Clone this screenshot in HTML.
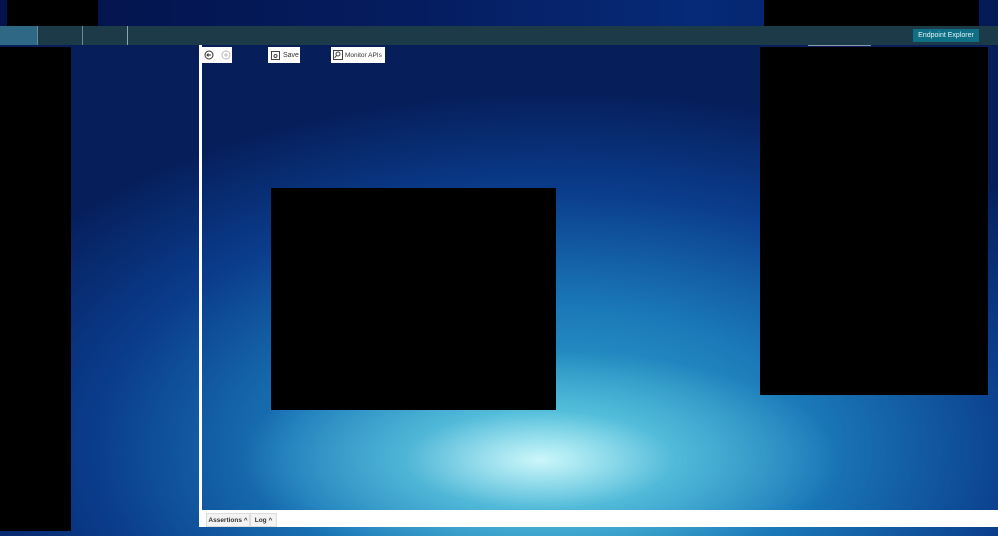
<!DOCTYPE html>
<html><head><meta charset="utf-8"><style>
*{margin:0;padding:0;box-sizing:border-box}
body{width:998px;height:536px;overflow:hidden;position:relative;font-family:"Liberation Sans",sans-serif;
background:
radial-gradient(ellipse 300px 110px at 540px 460px, rgba(220,255,255,0.9), rgba(120,220,235,0.5) 45%, rgba(40,150,200,0) 100%),
radial-gradient(ellipse 650px 360px at 560px 450px, #35aed0 0%, #1a78b8 40%, #0a3c8c 72%, #061e5a 100%),
#051a55;}
.a{position:absolute}
.k{background:#000}
.w{background:#fff}
.t{font-size:7px;color:#333;display:flex;align-items:center;gap:3px;padding-left:3px;white-space:nowrap}
.tab{position:absolute;background:#f3f3f3;border:1px solid #ddd;font-size:6.5px;font-weight:bold;color:#333;display:flex;align-items:center;justify-content:center;white-space:nowrap}
</style></head><body>
<div class="a" style="left:0;top:0;width:998px;height:26px;background:linear-gradient(90deg,#03124a,#051c5e 40%,#062a78 70%,#041a55)"></div>
<div class="a k" style="left:7px;top:0;width:91px;height:26px"></div>
<div class="a k" style="left:764px;top:0;width:215px;height:26px"></div>
<div class="a" style="left:0;top:26px;width:998px;height:19px;background:#1c3a48"></div>
<div class="a" style="left:0;top:26px;width:37px;height:19px;background:#2e6884"></div>
<div class="a" style="left:37px;top:26px;width:1px;height:19px;background:#6a8a98"></div>
<div class="a" style="left:82px;top:26px;width:1px;height:19px;background:#6a8a98"></div>
<div class="a" style="left:127px;top:26px;width:1px;height:19px;background:#8aa6b2"></div>
<div class="a" style="left:913px;top:29px;width:66px;height:13px;background:#0e6f85;color:#e6f4f8;font-size:7px;display:flex;align-items:center;justify-content:center;white-space:nowrap">Endpoint Explorer</div>
<div class="a" style="left:808px;top:45px;width:63px;height:1px;background:#8898a8"></div>
<div class="a k" style="left:0;top:47px;width:71px;height:484px"></div>
<div class="a w" style="left:199px;top:45px;width:3px;height:482px"></div>
<div class="a w" style="left:199px;top:510px;width:799px;height:17px"></div>
<div class="a w t" style="left:201px;top:47px;width:31px;height:16px">
<svg width="10" height="10" viewBox="0 0 10 10"><circle cx="5" cy="5" r="4" fill="none" stroke="#333"/><path d="M7 5H3M4.5 3.5L3 5l1.5 1.5" fill="none" stroke="#333"/></svg>
<svg width="10" height="10" viewBox="0 0 10 10" style="margin-left:4px"><circle cx="5" cy="5" r="4" fill="none" stroke="#bbb"/><path d="M5 3v4M3 5h4" stroke="#bbb"/></svg></div>
<div class="a w t" style="left:268px;top:47px;width:32px;height:16px">
<svg width="9" height="9" viewBox="0 0 9 9"><rect x=".5" y=".5" width="8" height="8" fill="none" stroke="#444"/><circle cx="4.5" cy="5" r="1.5" fill="none" stroke="#444"/></svg>Save</div>
<div class="a w t" style="left:331px;top:47px;width:54px;height:16px;font-size:6.5px;gap:2px;padding-left:2px">
<svg width="10" height="10" viewBox="0 0 10 10"><rect x=".5" y=".5" width="9" height="9" fill="none" stroke="#444"/><circle cx="5" cy="4" r="2" fill="none" stroke="#444"/><path d="M3.5 5.5L1.5 8" stroke="#444"/></svg>Monitor APIs</div>
<div class="a k" style="left:271px;top:188px;width:285px;height:222px"></div>
<div class="a k" style="left:760px;top:47px;width:228px;height:348px"></div>
<div class="tab" style="left:206px;top:513px;width:44px;height:14px">Assertions ^</div>
<div class="tab" style="left:250px;top:513px;width:27px;height:14px">Log ^</div>
</body></html>
